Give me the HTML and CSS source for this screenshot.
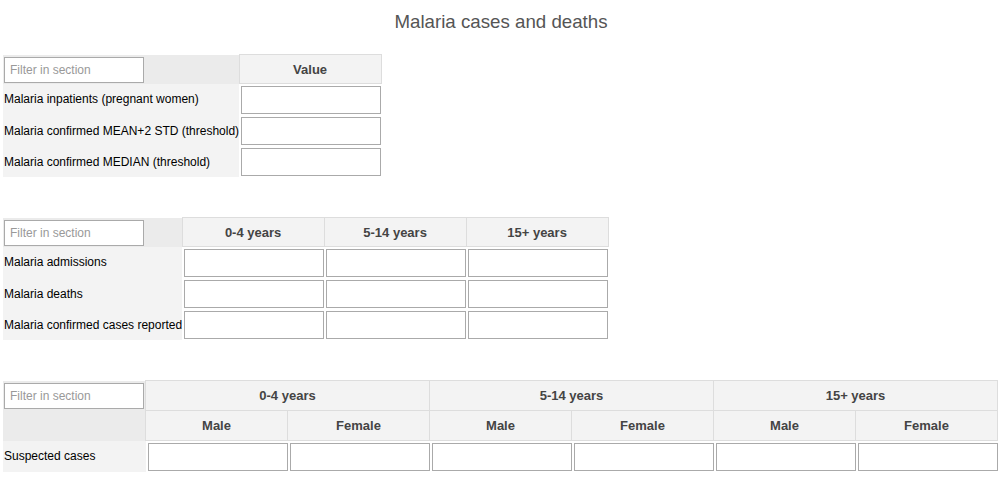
FILE: index.html
```html
<!DOCTYPE html>
<html lang="en">
<head>
<meta charset="utf-8">
<title>Malaria cases and deaths</title>
<link rel="stylesheet" href="styles.css">
</head>
<body>
<h3 class="title">Malaria cases and deaths</h3>

<table class="section">
  <thead>
    <tr>
      <th class="filter-cell"><input class="filter" type="text" placeholder="Filter in section"></th>
      <th class="col-head">Value</th>
    </tr>
  </thead>
  <tbody>
    <tr><td class="label">Malaria inpatients (pregnant women)</td><td class="entry"><input type="text"></td></tr>
    <tr><td class="label">Malaria confirmed MEAN+2 STD (threshold)</td><td class="entry"><input type="text"></td></tr>
    <tr><td class="label">Malaria confirmed MEDIAN (threshold)</td><td class="entry"><input type="text"></td></tr>
  </tbody>
</table>

<table class="section">
  <thead>
    <tr>
      <th class="filter-cell"><input class="filter" type="text" placeholder="Filter in section"></th>
      <th class="col-head">0-4 years</th>
      <th class="col-head">5-14 years</th>
      <th class="col-head">15+ years</th>
    </tr>
  </thead>
  <tbody>
    <tr><td class="label">Malaria admissions</td><td class="entry"><input type="text"></td><td class="entry"><input type="text"></td><td class="entry"><input type="text"></td></tr>
    <tr><td class="label">Malaria deaths</td><td class="entry"><input type="text"></td><td class="entry"><input type="text"></td><td class="entry"><input type="text"></td></tr>
    <tr><td class="label">Malaria confirmed cases reported</td><td class="entry"><input type="text"></td><td class="entry"><input type="text"></td><td class="entry"><input type="text"></td></tr>
  </tbody>
</table>

<table class="section grouped">
  <thead>
    <tr>
      <th class="filter-cell" rowspan="2"><input class="filter" type="text" placeholder="Filter in section"></th>
      <th class="col-head" colspan="2">0-4 years</th>
      <th class="col-head" colspan="2">5-14 years</th>
      <th class="col-head" colspan="2">15+ years</th>
    </tr>
    <tr>
      <th class="col-head">Male</th>
      <th class="col-head">Female</th>
      <th class="col-head">Male</th>
      <th class="col-head">Female</th>
      <th class="col-head">Male</th>
      <th class="col-head">Female</th>
    </tr>
  </thead>
  <tbody>
    <tr>
      <td class="label">Suspected cases</td>
      <td class="entry"><input type="text"></td>
      <td class="entry"><input type="text"></td>
      <td class="entry"><input type="text"></td>
      <td class="entry"><input type="text"></td>
      <td class="entry"><input type="text"></td>
      <td class="entry"><input type="text"></td>
    </tr>
  </tbody>
</table>
</body>
</html>
```

FILE: styles.css
```css
body {
  margin: 0;
  padding: 0 3px;
  font-family: "Liberation Sans", Arial, sans-serif;
  font-size: 12px;
  color: #000;
  background: #fff;
}

.title {
  font-size: 18.72px;
  font-weight: normal;
  color: #555;
  text-align: center;
  line-height: 22px;
  margin: 11px 0 21px;
}

.section {
  border-collapse: collapse;
  margin-bottom: 40px;
}

.filter-cell {
  background: #ebebeb;
  padding: 2px 1px 1px 1px;
  text-align: left;
  vertical-align: top;
}

.filter {
  display: block;
  width: 140px;
  height: 26px;
  box-sizing: border-box;
  border: 1px solid #aaa;
  margin: 0;
  padding: 0 5px;
  font-family: "Liberation Sans", Arial, sans-serif;
  font-size: 12px;
  color: #000;
  background: #fff;
}

.filter::placeholder {
  color: #999;
}

.col-head {
  width: 141px;
  height: 28px;
  padding: 0;
  background: #f3f3f3;
  border: 1px solid #ddd;
  font-size: 13px;
  font-weight: bold;
  color: #444;
  text-align: center;
}

.grouped .col-head {
  height: 29px;
}

.label {
  background: #f3f3f3;
  padding: 0 0 0 1px;
  height: 31px;
  white-space: nowrap;
}

.entry {
  padding: 2px 0 1px 2px;
}

.entry input {
  display: block;
  width: 140px;
  height: 28px;
  box-sizing: border-box;
  border: 1px solid #aaa;
  margin: 0;
  padding: 0 4px;
  background: #fff;
}
```
